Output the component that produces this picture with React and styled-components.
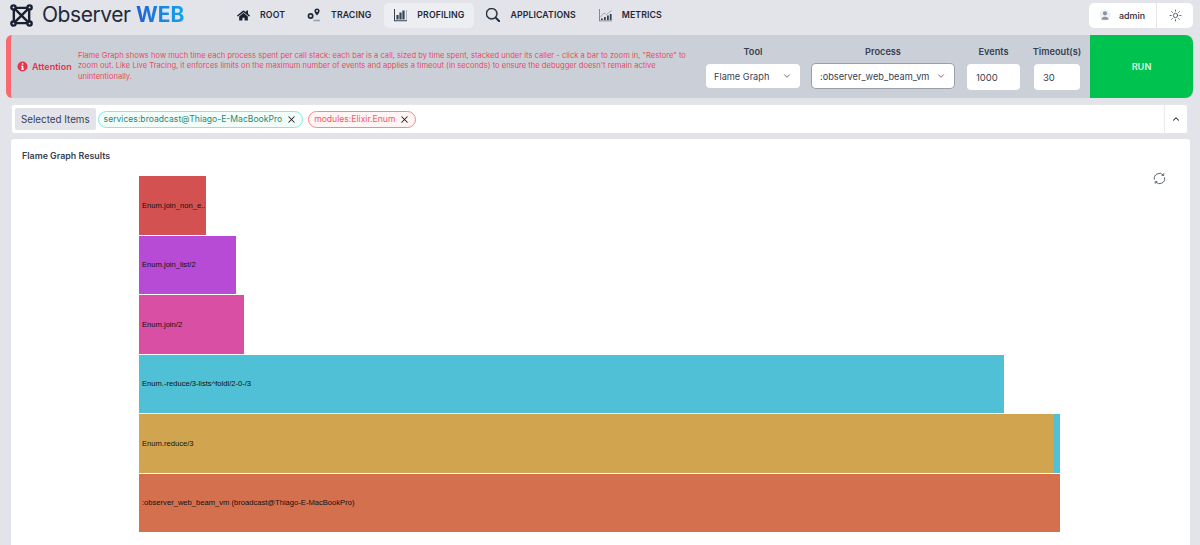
import React from "react";
import styled, { createGlobalStyle } from "styled-components";
import { FaHome } from "react-icons/fa";
import { BsSearch } from "react-icons/bs";
import { X, ChevronDown, ChevronUp, Sun } from "lucide-react";

const Global = createGlobalStyle`
  html, body { margin: 0; padding: 0; background: #e2e4ea; overflow: hidden; }
  body { font-family: Inter, "Liberation Sans", sans-serif; color: #1f2430; }
  * { box-sizing: border-box; }
`;
const Page = styled.div`width: 1200px; height: 545px; overflow: hidden; display: flex; flex-direction: column;`;
const TopBar = styled.header`height: 30px; margin-bottom: 5px; display: flex; align-items: center; padding: 0 7px 0 10px;`;
const Brand = styled.div`display: flex; align-items: center; gap: 9px; width: 217px; flex: none; font-size: 21px; letter-spacing: -.45px; line-height: 30px; color: #1f2937; white-space: nowrap;`;
const Web = styled.b`
  font-weight: 700;
  letter-spacing: 0;
  background: linear-gradient(90deg, #1d62d8, #14a3ea);
  -webkit-background-clip: text;
  background-clip: text;
  color: transparent;
`;
const Nav = styled.nav`display: flex; align-items: center;`;
const NavItem = styled.a`
  display: flex; align-items: center; gap: 10px; height: 25px;
  padding: 0 10px 0 ${p => p.$pad || 10}px; margin-right: ${p => p.$mr || 0}px;
  font-size: 8.75px; font-weight: 600; letter-spacing: .1px; color: #1f2937; border-radius: 5px;
  background: ${p => (p.$active ? "#eceef2" : "transparent")};
`;
const Spacer = styled.div`flex: 1;`;
const UserBox = styled.div`display: flex; height: 25px; background: #fff; border-radius: 5px; align-items: center;`;
const UserPart = styled.div`display: flex; align-items: center; gap: 8px; height: 100%; padding: 0 11px 0 10px; font-size: 8.9px; font-weight: 500; border-right: 1px solid #e5e7eb;`;
const ThemePart = styled.div`display: flex; align-items: center; justify-content: center; width: 36px; color: #374151;`;

const Alert = styled.section`
  margin: 0 7px 0 6px; height: 63px; display: flex; background: #cbd0d8;
  border-left: 5px solid #f8686c; border-radius: 6px;
`;
const Attention = styled.div`display: flex; align-items: center; gap: 4px; padding-left: 6px; width: 67px; flex: none; font-size: 9px; font-weight: 600; color: #e5354a; white-space: nowrap;`;
const AlertText = styled.p`margin: 0; width: 617px; flex: none; align-self: center; font-size: 7.58px; line-height: 10.2px; color: #ea4a5e;`;
const Field = styled.div`display: flex; flex-direction: column; align-items: center; width: ${p => p.$w}px; margin-left: ${p => p.$ml}px; padding-top: 11px; flex: none;`;
const FieldLabel = styled.label`font-size: 9.2px; font-weight: 600; line-height: 11px; color: #374151; white-space: nowrap;`;
const SelectBox = styled.div`
  width: 100%; height: 24px; margin-top: 7px; background: #fff; border-radius: 4px; display: flex; align-items: center;
  justify-content: space-between; padding: 0 8px; font-size: 9.2px; color: #374151;
  box-shadow: ${p => (p.$focus ? "0 0 0 1px #9aa0aa" : "none")};
`;
const NumberBox = styled.div`width: 100%; height: 26px; margin-top: 7px; background: #fff; border-radius: 4px; display: flex; align-items: center; padding: 1px 9px 0; font-size: 9.5px; color: #374151;`;
const Run = styled.button`
  border: 0; width: 103px; margin-left: auto; background: #00c24e; color: #d9f7e4; font: 600 9.2px Inter, sans-serif;
  border-radius: 0 8px 8px 0; padding: 0;
`;

const Selected = styled.section`
  margin: 6px 12px 0 11px; height: 30px; display: flex; align-items: center; background: #fff;
  border: 1px solid #e4e6ea; border-radius: 3px; padding-left: 3px;
`;
const SelectedLabel = styled.div`height: 22px; display: flex; align-items: center; padding: 0 6px; background: #e2e4ea; border-radius: 2px; font-size: 9.8px; color: #374151; margin-right: 2px;`;
const Chip = styled.div`
  height: 17px; display: flex; align-items: center; gap: 4px; padding: 0 5px; margin-right: 5px; border-radius: 9px; font-size: 8.6px;
  color: ${p => p.$fg}; background: ${p => p.$bg}; border: 1px solid ${p => p.$bd};
  & svg { color: #222; }
`;
const Collapse = styled.div`margin-left: auto; width: 23px; height: 100%; display: flex; align-items: center; justify-content: center; border-left: 1px solid #e9ebee; color: #222;`;

const Results = styled.main`margin: 5px 10px 0 11px; flex: 1; background: #fff; position: relative; padding: 11px 0 0 11px; border-radius: 3px 3px 0 0;`;
const ResultsTitle = styled.h2`margin: 0; font-size: 8.9px; line-height: 11px; font-weight: 600; color: #374151;`;
const RefreshBtn = styled.div`position: absolute; top: 33px; left: 1142px; line-height: 0;`;
const Flame = styled.div`margin: 15px 0 0 117px; display: flex; flex-direction: column; gap: 1px;`;
const Bar = styled.div`height: 58.5px; display: flex; align-items: center;`;
const Cell = styled.div`
  height: 100%; background: ${p => p.$c}; flex: none; display: flex; align-items: center; padding-left: 3px;
  font-family: "Liberation Sans", Arial, sans-serif; font-size: 7.6px; color: #111; white-space: nowrap; overflow: hidden;
`;

const Logo = () => (
  <svg width="23" height="23" viewBox="0 0 24 24" fill="none" stroke="#1a2030" strokeWidth="2.5">
    <path d="M4 4H20V20H4Z M4 4L20 20 M20 4L4 20" />
    <g fill="#e2e4ea">
      <circle cx="3.6" cy="3.6" r="2.2" /><circle cx="20.4" cy="3.6" r="2.2" />
      <circle cx="3.6" cy="20.4" r="2.2" /><circle cx="20.4" cy="20.4" r="2.2" />
    </g>
  </svg>
);
const PinsIcon = () => (
  <svg width="14" height="14" viewBox="0 0 14 14">
    <circle cx="3.6" cy="8" r="3" fill="#1f2937" /><circle cx="3.6" cy="8" r="1.2" fill="#e2e4ea" />
    <path d="M10 0.5a2.6 2.6 0 0 1 2.6 2.6C12.6 5 10 7.5 10 7.5S7.4 5 7.4 3.1A2.6 2.6 0 0 1 10 .5Z" fill="#1f2937" />
    <circle cx="10" cy="3" r="1" fill="#e2e4ea" />
    <path d="M6.5 12.5h6.5" stroke="#9ca3af" strokeWidth="1.6" />
  </svg>
);
const BarsIcon = () => (
  <svg width="13" height="14" viewBox="0 0 13 14" fill="#374151">
    <path d="M0 1h1v11.2h12v1H0Z" />
    <path d="M2.4 7h2.2v4.6H2.4ZM5.4 4.5h2.2v7.1H5.4ZM8.4 2.5h2.2v9.1H8.4Z" />
    <path d="M12 2h.8v10H12Z" fill="#9ca3af" />
  </svg>
);
const MetricsIcon = () => (
  <svg width="13" height="14" viewBox="0 0 13 14" fill="#374151">
    <path d="M0 1h.8v11.4H13v.8H0Z" fill="#6b7280" />
    <path d="M2 10.5h1.8v1.5H2ZM5 9h1.8v3H5ZM8 7.5h1.8V12H8ZM10.8 6h1.8v6h-1.8Z" />
    <path d="M1.5 9L5 5l2.5 1.5L12.5 2.5" fill="none" stroke="#9ca3af" strokeWidth=".9" />
  </svg>
);
const InfoIcon = () => (
  <svg width="11" height="11" viewBox="0 0 11 11">
    <circle cx="5.5" cy="5.5" r="5" fill="#e5354a" />
    <rect x="4.8" y="2.2" width="1.5" height="1.5" fill="#fff" />
    <path d="M4 4.7h2.3v3h.8v1H4v-1h.8v-2H4Z" fill="#fff" />
  </svg>
);
const Avatar = () => (
  <svg width="12" height="15" viewBox="0 0 14 16">
    <circle cx="7" cy="7.5" r="6.5" fill="#eef0f3" />
    <circle cx="7" cy="5.5" r="2.4" fill="#8b93a1" />
    <path d="M2.8 13c0-2.2 1.8-3.4 4.2-3.4s4.2 1.2 4.2 3.4Z" fill="#8b93a1" />
  </svg>
);
const SyncIcon = () => (
  <svg width="13" height="13" viewBox="0 0 13 13" fill="none" stroke="#4b5563" strokeWidth=".9">
    <path d="M1.4 7.6A5.2 5.2 0 0 1 10.3 3" />
    <path d="M11.6 5.4A5.2 5.2 0 0 1 2.7 10" />
    <path d="M10.8 1.2v2.3H8.6M2.2 11.8V9.5h2.2" strokeWidth=".8" />
  </svg>
);

const rows = [
  [{ w: 67, c: "#d35151", t: "Enum.join_non_e.." }],
  [{ w: 97, c: "#b84bd6", t: "Enum.join_list/2" }],
  [{ w: 104.5, c: "#d84fa3", t: "Enum.join/2" }],
  [{ w: 865, c: "#4fc0d5", t: "Enum.-reduce/3-lists^foldl/2-0-/3" }],
  [{ w: 915, c: "#d1a550", t: "Enum.reduce/3" }, { w: 6, c: "#4fc0d5", t: "" }],
  [{ w: 921, c: "#d5704f", t: ":observer_web_beam_vm (broadcast@Thiago-E-MacBookPro)" }],
];

export default function App() {
  return (
    <Page>
      <Global />
      <TopBar>
        <Brand>
          <Logo />
          <span>Observer <Web>WEB</Web></span>
        </Brand>
        <Nav>
          <NavItem><FaHome size={13} color="#1a2030" />ROOT</NavItem>
          <NavItem $pad={12} $mr={3}><PinsIcon />TRACING</NavItem>
          <NavItem $active $mr={2}><BarsIcon />PROFILING</NavItem>
          <NavItem $mr={3}><BsSearch size={14} color="#1f2937" stroke="#1f2937" strokeWidth={0.6} />APPLICATIONS</NavItem>
          <NavItem><MetricsIcon />METRICS</NavItem>
        </Nav>
        <Spacer />
        <UserBox>
          <UserPart><Avatar />admin</UserPart>
          <ThemePart><Sun size={13} strokeWidth={1.5} /></ThemePart>
        </UserBox>
      </TopBar>
      <Alert>
        <Attention><InfoIcon />Attention</Attention>
        <AlertText>
          Flame Graph shows how much time each process spent per call stack: each bar is a call, sized by time spent, stacked under its caller - click a bar to zoom in, "Restore" to zoom out. Like Live Tracing, it enforces limits on the maximum number of events and applies a timeout (in seconds) to ensure the debugger doesn't remain active unintentionally.
        </AlertText>
        <Field $w={94} $ml={11}>
          <FieldLabel>Tool</FieldLabel>
          <SelectBox>Flame Graph<ChevronDown size={10} color="#555" /></SelectBox>
        </Field>
        <Field $w={142} $ml={12}>
          <FieldLabel>Process</FieldLabel>
          <SelectBox $focus>:observer_web_beam_vm<ChevronDown size={10} color="#555" /></SelectBox>
        </Field>
        <Field $w={53} $ml={13}>
          <FieldLabel>Events</FieldLabel>
          <NumberBox>1000</NumberBox>
        </Field>
        <Field $w={46} $ml={14}>
          <FieldLabel>Timeout(s)</FieldLabel>
          <NumberBox>30</NumberBox>
        </Field>
        <Run>RUN</Run>
      </Alert>
      <Selected>
        <SelectedLabel>Selected Items</SelectedLabel>
        <Chip $fg="#1f8a78" $bg="#f2fdfa" $bd="#8fe6d3">services:broadcast@Thiago-E-MacBookPro<X size={11} strokeWidth={2.2} /></Chip>
        <Chip $fg="#ef5a62" $bg="#fff5f5" $bd="#f28a90">modules:Elixir.Enum<X size={11} strokeWidth={2.2} /></Chip>
        <Collapse><ChevronUp size={10} strokeWidth={2.5} /></Collapse>
      </Selected>
      <Results>
        <ResultsTitle>Flame Graph Results</ResultsTitle>
        <RefreshBtn><SyncIcon /></RefreshBtn>
        <Flame>
          {rows.map((r, i) => (
            <Bar key={i}>
              {r.map((c, j) => <Cell key={j} $c={c.c} style={{ width: c.w }}>{c.t}</Cell>)}
            </Bar>
          ))}
        </Flame>
      </Results>
    </Page>
  );
}
